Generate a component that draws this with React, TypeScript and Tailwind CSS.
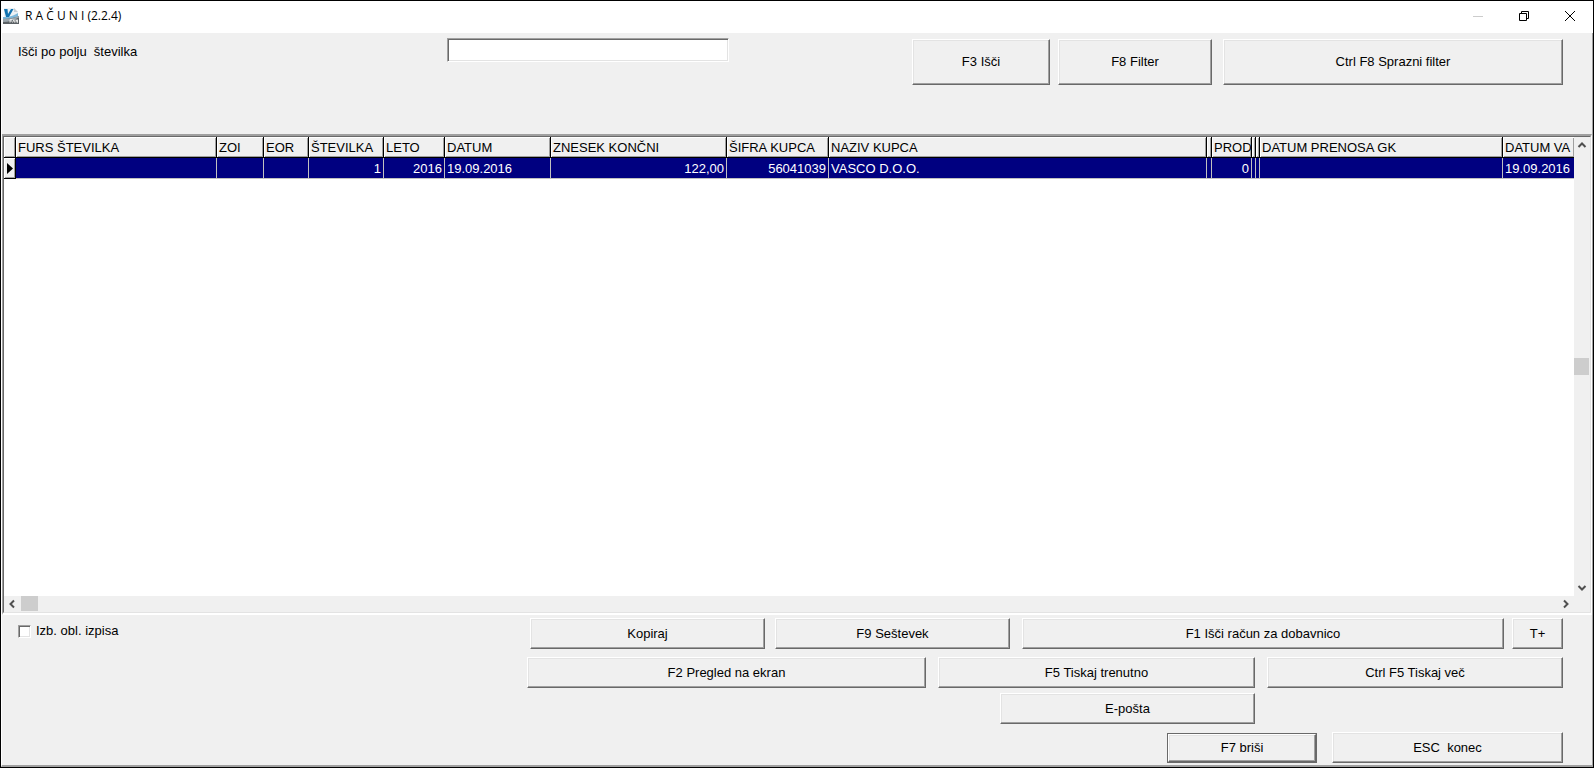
import { useState } from "react";

const columns = [
  { title: "FURS ŠTEVILKA", value: "", col: "w-[201px]" },
  { title: "ZOI", value: "", col: "w-[47px]" },
  { title: "EOR", value: "", col: "w-[45px]" },
  { title: "ŠTEVILKA", value: "1", col: "w-[75px]", right: true },
  { title: "LETO", value: "2016", col: "w-[61px]", right: true },
  { title: "DATUM", value: "19.09.2016", col: "w-[106px]" },
  { title: "ZNESEK KONČNI", value: "122,00", col: "w-[176px]", right: true },
  { title: "ŠIFRA KUPCA", value: "56041039", col: "w-[102px]", right: true },
  { title: "NAZIV KUPCA", value: "VASCO D.O.O.", col: "" },
  { title: "", value: "", col: "w-[5px]" },
  { title: "PROD", value: "0", col: "w-[40px]", right: true },
  { title: "", value: "", col: "w-[4px]" },
  { title: "", value: "", col: "w-[4px]" },
  { title: "DATUM PRENOSA GK", value: "", col: "w-[243px]" },
  { title: "DATUM VA", value: "19.09.2016", col: "w-[71px]", last: true },
];

function Button({ children, className = "" }: { children: string; className?: string }) {
  return (
    <button
      className={
        "border border-t-white border-l-white border-r-[#696969] border-b-[#696969] bg-[#f0f0f0] whitespace-pre " +
        "shadow-[inset_-1px_-1px_0_#a0a0a0,inset_1px_1px_0_#e3e3e3] " +
        className
      }
    >
      {children}
    </button>
  );
}

function Chevron({ d, label }: { d: string; label: string }) {
  return (
    <button aria-label={label} className="flex h-4 w-4 shrink-0 items-center justify-center">
      <svg width="10" height="10" viewBox="0 0 10 10" fill="none" stroke="#505050" strokeWidth="2">
        <path d={d} />
      </svg>
    </button>
  );
}

function AppIcon() {
  return (
    <svg width="16" height="16" viewBox="0 0 16 16">
      <path d="M1 0h10l4 4v6H1z" fill="#edf2f5" />
      <path d="M11 0v4h4z" fill="#c3ccd3" />
      <path d="M0 9c4 0 9 0 15-4v3c-5 3-10 4-15 4z" fill="#7db9dc" />
      <path d="M0 11c6 0 11-1 16-3v8H0z" fill="#5a6064" />
      <path d="M0 11c6 0 11-1 16-3v1.500C11 12 6 14 0 14z" fill="#9aa5ac" />
      <path d="M1 1h3.500l.5 5 3-5h2.500L6 9H3z" fill="#1173b0" />
      <path d="M7 14.500V11.500h2.500M7 13h2M9.500 14.500l1.500-3 .5 3M13 14.500v-3l1.500 3v-3" fill="none" stroke="#e6e6e6" />
    </svg>
  );
}

function TitleBar() {
  return (
    <header className="flex h-8 shrink-0 items-center bg-white pb-0.5 pl-0.5">
      <AppIcon />
      <h1 className="ml-1.5 flex-1 font-['Open_Sans',sans-serif] text-[12px]">R A Č U N I (2.2.4)</h1>
      <button aria-label="Minimize" className="flex h-full w-[46px] items-center justify-center">
        <svg width="10" height="10" viewBox="0 0 10 10" stroke="#cccccc">
          <path d="M0 5.500h10" />
        </svg>
      </button>
      <button aria-label="Restore" className="flex h-full w-[46px] items-center justify-center">
        <svg width="10" height="10" viewBox="0 0 10 10" fill="none" stroke="#000">
          <path d="M.5 2.500h7v7h-7zM2.500 2.500v-2h7v7h-2" />
        </svg>
      </button>
      <button aria-label="Close" className="flex h-full w-[46px] items-center justify-center">
        <svg width="10" height="10" viewBox="0 0 10 10" stroke="#000">
          <path d="M0 0l10 10M10 0L0 10" />
        </svg>
      </button>
    </header>
  );
}

function InvoiceTable() {
  return (
    <table className="w-full table-fixed border-separate border-spacing-0 text-left">
      <colgroup>
        <col className="w-[12px]" />
        {columns.map((c, i) => (
          <col key={i} className={c.col} />
        ))}
      </colgroup>
      <thead>
        <tr className="h-[21px]">
          <th className="border-r border-b border-black bg-[#f0f0f0] p-0 shadow-[inset_1px_1px_0_#fff,inset_-1px_-1px_0_#a0a0a0]" />
          {columns.map((c, i) => (
            <th
              key={i}
              className={
                "overflow-hidden border-b border-black bg-[#f0f0f0] p-0 pt-0.5 font-normal whitespace-nowrap " +
                "shadow-[inset_1px_1px_0_#fff,inset_-1px_-1px_0_#a0a0a0] " +
                (c.last ? "" : "border-r")
              }
            >
              {c.title && <span className="pl-0.5">{c.title}</span>}
            </th>
          ))}
        </tr>
      </thead>
      <tbody>
        <tr className="h-[21px] text-white">
          <td className="border-r border-b border-black bg-[#f0f0f0] p-0 shadow-[inset_1px_1px_0_#fff,inset_-1px_-1px_0_#a0a0a0]">
            <svg className="ml-[3px]" width="6" height="11" viewBox="0 0 6 11">
              <path d="M0 0l6 5.500L0 11z" fill="#000" />
            </svg>
          </td>
          {columns.map((c, i) => (
            <td
              key={i}
              className={
                "overflow-hidden border-b border-[#c0c0c0] bg-[#000080] p-0 pt-0.5 whitespace-nowrap " +
                (c.last ? "" : "border-r ") +
                (c.right ? "text-right" : "")
              }
            >
              {c.value && <span className={c.right ? "pr-0.5" : "pl-0.5"}>{c.value}</span>}
            </td>
          ))}
        </tr>
      </tbody>
    </table>
  );
}

export default function App() {
  const [query, setQuery] = useState("");
  const [chooseLayout, setChooseLayout] = useState(false);

  return (
    <div className="flex min-h-screen flex-col border border-black bg-[#f0f0f0] font-['Liberation_Sans',Arial,sans-serif] text-[13px] leading-4 text-black">
      <TitleBar />

      <div className="flex flex-1 flex-col border-r border-b-2 border-l border-r-[#a0a0a0] border-b-[#a0a0a0] border-l-white">
        <section className="flex h-[101px] items-start pt-[5px] pr-[29px] pl-4">
          <label htmlFor="query" className="w-[429px] pt-1.5 whitespace-pre">
            Išči po polju  številka
          </label>
          <input
            id="query"
            value={query}
            onChange={(e) => setQuery(e.target.value)}
            className="h-6 w-[282px] border border-t-[#a0a0a0] border-r-white border-b-white border-l-[#a0a0a0] bg-white px-1 shadow-[inset_1px_1px_0_#696969,inset_-1px_-1px_0_#e3e3e3] outline-none"
          />
          <div className="ml-auto flex pt-px">
            <Button className="mr-2 h-[46px] w-[138px]">F3 Išči</Button>
            <Button className="mr-[11px] h-[46px] w-[154px]">F8 Filter</Button>
            <Button className="h-[46px] w-[340px]">Ctrl F8 Sprazni filter</Button>
          </div>
        </section>

        <main className="flex flex-1 flex-col border-t-2 border-r border-b-2 border-l border-t-[#a0a0a0] border-r-white border-b-white border-l-[#a0a0a0]">
          <div className="flex flex-1 flex-col border border-t-[#696969] border-r-[#e3e3e3] border-b-[#e3e3e3] border-l-[#696969]">
            <div className="flex flex-1">
              <div className="flex-1 bg-white">
                <InvoiceTable />
              </div>
              <div className="flex w-4 flex-col">
                <Chevron label="Gor" d="M1.500 7L5 3.500 8.500 7" />
                <div className="flex flex-1 items-center">
                  <div className="h-[17px] w-[15px] bg-[#cdcdcd]" />
                </div>
                <Chevron label="Dol" d="M1.500 3L5 6.500 8.500 3" />
              </div>
            </div>
            <div className="flex h-4 pr-4">
              <Chevron label="Levo" d="M7 1.500L3.500 5 7 8.500" />
              <div className="flex-1">
                <div className="ml-px h-[15px] w-[17px] bg-[#cdcdcd]" />
              </div>
              <Chevron label="Desno" d="M3 1.500L6.500 5 3 8.500" />
            </div>
          </div>
        </main>

        <section className="flex items-start justify-between pt-[3px] pr-[29px] pb-0.5 pl-4">
          <label className="flex items-center gap-[5px] pt-[5px]">
            <input
              type="checkbox"
              checked={chooseLayout}
              onChange={(e) => setChooseLayout(e.target.checked)}
              className="h-[13px] w-[13px] appearance-none border border-t-[#a0a0a0] border-r-white border-b-white border-l-[#a0a0a0] bg-white shadow-[inset_1px_1px_0_#696969,inset_-1px_-1px_0_#e3e3e3] checked:bg-[#000080]"
            />
            Izb. obl. izpisa
          </label>

          <div className="flex flex-col items-end gap-2">
            <div className="flex">
              <Button className="mr-2.5 h-[31px] w-[235px]">Kopiraj</Button>
              <Button className="mr-3 h-[31px] w-[235px]">F9 Seštevek</Button>
              <Button className="mr-2 h-[31px] w-[482px]">F1 Išči račun za dobavnico</Button>
              <Button className="h-[31px] w-[51px]">T+</Button>
            </div>
            <div className="grid grid-cols-[399px_317px_296px] gap-x-3 gap-y-[5px]">
              <Button className="h-[31px]">F2 Pregled na ekran</Button>
              <Button className="h-[31px]">F5 Tiskaj trenutno</Button>
              <Button className="h-[31px]">Ctrl F5 Tiskaj več</Button>
              <Button className="col-start-2 h-[31px] w-[255px] justify-self-end">E-pošta</Button>
            </div>
            <div className="flex items-end gap-[15px]">
              {/* default button gets the extra dark frame */}
              <div className="flex border border-[#696969]">
                <Button className="h-[28px] w-[148px]">F7 briši</Button>
              </div>
              <Button className="h-[31px] w-[231px]">ESC  konec</Button>
            </div>
          </div>
        </section>
      </div>
    </div>
  );
}
